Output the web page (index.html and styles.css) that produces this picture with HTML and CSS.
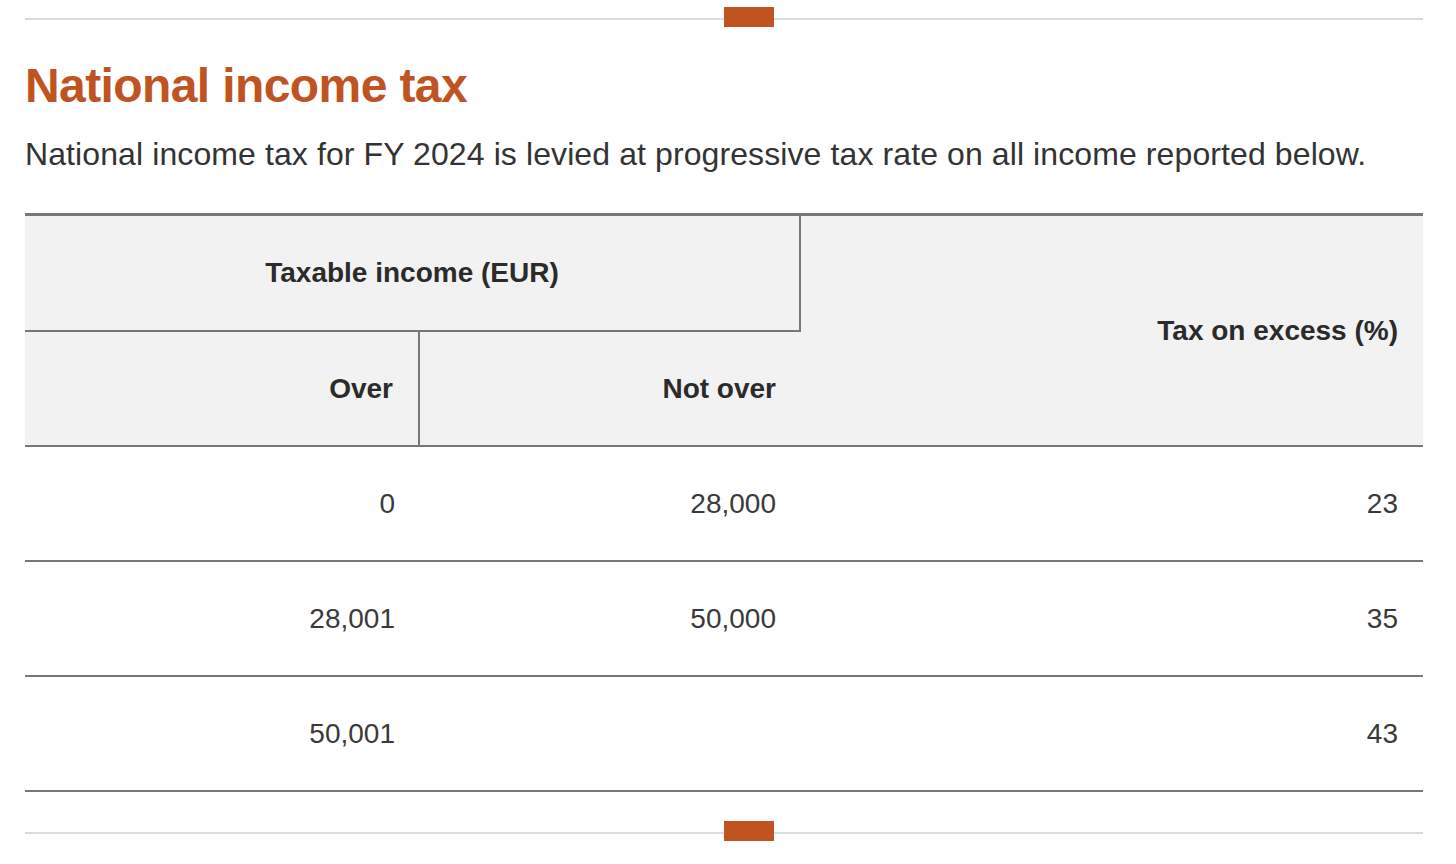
FILE: index.html
```html
<!DOCTYPE html>
<html lang="en">
<head>
<meta charset="utf-8">
<title>National income tax</title>
<link rel="stylesheet" href="styles.css">
</head>
<body>
<main class="page">
  <div class="divider divider-top"><span class="divider-mark"></span></div>
  <h1 class="title">National income tax</h1>
  <p class="lead">National income tax for FY 2024 is levied at progressive tax rate on all income reported below.</p>
  <table class="rates">
    <colgroup>
      <col class="col-over">
      <col class="col-notover">
      <col class="col-tax">
    </colgroup>
    <thead>
      <tr>
        <th class="h-group" colspan="2">Taxable income (EUR)</th>
        <th class="h-tax" rowspan="2">Tax on excess (%)</th>
      </tr>
      <tr>
        <th class="h-over">Over</th>
        <th class="h-notover">Not over</th>
      </tr>
    </thead>
    <tbody>
      <tr><td>0</td><td>28,000</td><td>23</td></tr>
      <tr><td>28,001</td><td>50,000</td><td>35</td></tr>
      <tr><td>50,001</td><td></td><td>43</td></tr>
    </tbody>
  </table>
  <div class="divider divider-bottom"><span class="divider-mark"></span></div>
</main>
</body>
</html>
```

FILE: styles.css
```css
html, body {
  margin: 0;
  padding: 0;
  background: #ffffff;
}

body {
  font-family: "Liberation Sans", Arial, Helvetica, sans-serif;
  color: #333333;
}

.page {
  width: 1398px;
  margin: 0 0 0 25px;
}

.divider {
  display: block;
  height: 20px;
  background: linear-gradient(#dcdcdc, #dcdcdc) no-repeat 0 11px / 100% 2px;
}

.divider-top {
  margin-top: 7px;
}

.divider-bottom {
  margin-top: 29px;
}

.divider-mark {
  display: block;
  width: 50px;
  height: 20px;
  margin-left: 50%;
  background: #c05322;
}

.title {
  margin: 31px 0 0;
  font-size: 48px;
  line-height: 56px;
  font-weight: 700;
  letter-spacing: -0.6px;
  color: #c05322;
}

.lead {
  margin: 20px 0 0;
  font-size: 32px;
  line-height: 40px;
  letter-spacing: 0.1px;
  color: #333333;
}

.rates {
  margin-top: 39px;
  width: 1398px;
  table-layout: fixed;
  border-collapse: separate;
  border-spacing: 0;
  font-size: 28px;
}

.col-over { width: 395px; }
.col-notover { width: 381px; }
.col-tax { width: 622px; }

.rates th,
.rates td {
  box-sizing: border-box;
  padding: 0 25px;
  text-align: right;
  vertical-align: middle;
}

.rates th {
  background: #f2f2f2;
  font-weight: 700;
  color: #2b2b2b;
}

.rates .h-group {
  height: 119px;
  text-align: center;
  border-top: 3px solid #777777;
  border-right: 2px solid #777777;
  border-bottom: 2px solid #777777;
}

.rates .h-tax {
  border-top: 3px solid #777777;
  border-bottom: 2px solid #777777;
}

.rates .h-over,
.rates .h-notover {
  height: 115px;
  border-bottom: 2px solid #777777;
}

.rates .h-over {
  border-right: 2px solid #777777;
}

.rates td {
  height: 115px;
  border-bottom: 2px solid #777777;
  color: #3a3a3a;
}
```
